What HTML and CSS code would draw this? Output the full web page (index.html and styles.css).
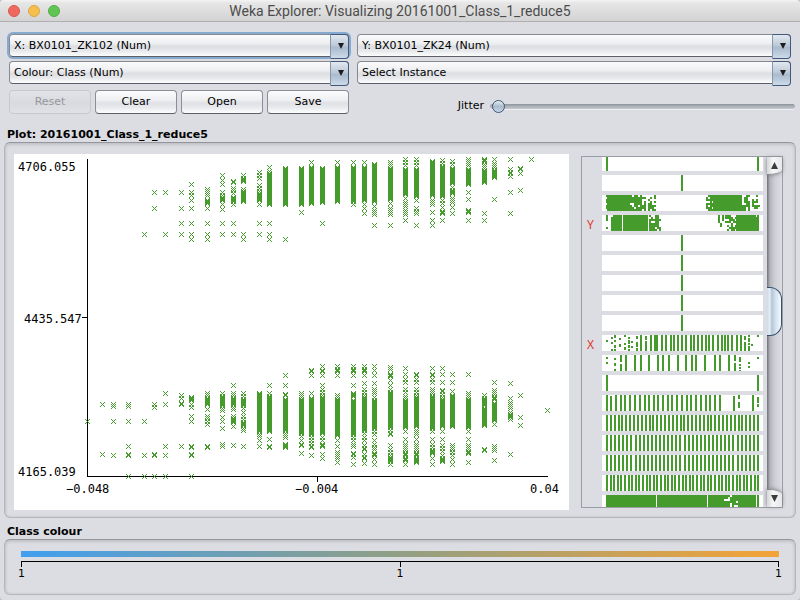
FILE: index.html
```html
<!DOCTYPE html>
<html lang="en">
<head>
<meta charset="utf-8">
<title>Weka Explorer: Visualizing 20161001_Class_1_reduce5</title>
<link rel="stylesheet" href="styles.css">
</head>
<body>
<div class="window">
  <header class="titlebar">
    <div class="lights">
      <button class="light light-close" aria-label="Close"></button>
      <button class="light light-min" aria-label="Minimise"></button>
      <button class="light light-zoom" aria-label="Zoom"></button>
    </div>
    <h1 class="title">Weka Explorer: Visualizing 20161001_Class_1_reduce5</h1>
  </header>

  <div class="controls">
    <div class="combo combo-focused"><select aria-label="X attribute"><option>X: BX0101_ZK102 (Num)</option></select></div>
    <div class="combo"><select aria-label="Y attribute"><option>Y: BX0101_ZK24 (Num)</option></select></div>
    <div class="combo"><select aria-label="Colour attribute"><option>Colour: Class (Num)</option></select></div>
    <div class="combo"><select aria-label="Selection shape"><option>Select Instance</option></select></div>
    <div class="buttons">
      <button class="btn" disabled>Reset</button>
      <button class="btn">Clear</button>
      <button class="btn">Open</button>
      <button class="btn">Save</button>
    </div>
    <div class="jitter">
      <label for="jitter">Jitter</label>
      <input id="jitter" type="range" min="0" max="50" value="0">
    </div>
  </div>

  <section>
    <h2 class="heading">Plot: 20161001_Class_1_reduce5</h2>
    <div class="panel plot-panel">
      <div class="plot">
        <svg class="plot-svg" viewBox="14 154 555 356">
          <g class="axis">
            <rect x="87" y="159" width="1" height="318"/>
            <rect x="87" y="476" width="461" height="1"/>
            <rect x="82" y="317" width="5" height="1"/>
            <rect x="317" y="477" width="1" height="5"/>
          </g>
          <path id="points" class="points"/>
          <g class="axis-text">
            <text x="18" y="171">4706.055</text>
            <text x="24" y="323">4435.547</text>
            <text x="18" y="476">4165.039</text>
            <text x="66" y="493">−0.048</text>
            <text x="295" y="493">−0.004</text>
            <text x="530" y="493">0.04</text>
          </g>
        </svg>
      </div>
      <div class="attributes">
        <div class="strips" id="strips"></div>
        <div class="scrollbar">
          <button class="arrow arrow-up" aria-label="Scroll up"><svg width="7" height="7"><path d="M3.500 0L7 7H0Z"/></svg></button>
          <div class="thumb"></div>
          <button class="arrow arrow-down" aria-label="Scroll down"><svg width="7" height="7"><path d="M0 0H7L3.500 7Z"/></svg></button>
        </div>
      </div>
    </div>
  </section>

  <section>
    <h2 class="heading heading-class">Class colour</h2>
    <div class="panel class-panel">
      <div class="ramp"></div>
      <div class="ruler"></div>
      <div class="ruler-text"><span>1</span><span>1</span><span>1</span></div>
    </div>
  </section>
</div>
<script src="script.js"></script>
</body>
</html>
```
FILE: styles.css
```css
* { box-sizing: border-box; }

body {
  margin: 0;
  background: #c4c4c6;
  color: #000;
  font: 11px/14px "DejaVu Sans", sans-serif;
}

button, select, input { font: inherit; color: inherit; margin: 0; }

.window {
  min-height: 100vh;
  background: #dcdde2;
  border-radius: 4px;
  overflow: hidden;
}

.titlebar {
  position: relative;
  display: flex;
  align-items: center;
  justify-content: center;
  height: 22px;
  background: linear-gradient(#f4f4f4, #e6e6e6 3px, #d3d3d3);
  border-bottom: 1px solid #b0b0b2;
}

.lights { position: absolute; left: 8px; top: 5px; display: flex; gap: 8px; }

.light { width: 12px; height: 12px; padding: 0; border: 1px solid; border-radius: 50%; }
.light-close { background: #ee6a5f; border-color: #dc5650; }
.light-min { background: #f5be4f; border-color: #dca93f; }
.light-zoom { background: #61c554; border-color: #50ad45; }

.title { margin: 0; font: 14px/20px Roboto, sans-serif; color: #4c4c4c; }

.controls {
  display: grid;
  grid-template-columns: 340px 1fr;
  gap: 4px 8px;
  padding: 12px 9px 0;
}

.combo { position: relative; height: 23px; }

.combo select {
  appearance: none;
  width: 100%;
  height: 23px;
  padding: 0 20px 0 4px;
  border: 1px solid #868991;
  border-bottom-color: #5c5f68;
  border-radius: 4px;
  background: linear-gradient(#fbfbfc, #eeeff1 40%, #dcdee2 55%, #e6e8eb 75%, #fcfdfd);
}

.combo::before {
  content: "";
  position: absolute;
  top: 0;
  right: 0;
  width: 17px;
  height: 23px;
  border: 1px solid #42597a;
  border-left-color: #8497ab;
  border-radius: 0 4px 4px 0;
  background: linear-gradient(#e2e8ef, #bccad8 45%, #a9bbcd 55%, #cddbe9);
  pointer-events: none;
}

.combo::after {
  content: "";
  position: absolute;
  top: 9px;
  right: 5px;
  border: 3px solid transparent;
  border-top: 6px solid #1d1d1f;
  border-bottom: 0;
  pointer-events: none;
}

.combo-focused select { box-shadow: 0 0 0 2px #86a9cf; }

.buttons { display: flex; gap: 4px; padding-top: 2px; }

.btn {
  flex: 1;
  height: 24px;
  padding: 0;
  border: 1px solid #8b8e96;
  border-bottom-color: #5c5f68;
  border-radius: 4px;
  background: linear-gradient(#fcfcfd, #eff0f2 40%, #dfe1e5 55%, #e8eaed 75%, #fcfdfd);
}

.btn:disabled {
  color: #95979c;
  border-color: #c6c8ce;
  background: linear-gradient(#e2e3e7, #d9dadf 55%, #e0e1e5);
}

.jitter {
  display: flex;
  align-items: center;
  justify-content: flex-end;
  gap: 6px;
  margin-right: -4px;
  padding-top: 10px;
}

.jitter input {
  appearance: none;
  width: 305px;
  height: 16px;
  background: none;
}

.jitter input::-webkit-slider-runnable-track {
  height: 5px;
  border-radius: 3px;
  background: linear-gradient(#8e9298, #a9adb4 40%, #c5cbd3);
  box-shadow: 0 1px 0 #eeeff2;
}

.jitter input::-webkit-slider-thumb {
  appearance: none;
  width: 13px;
  height: 13px;
  margin: -4px 0 0 2px;
  border: 1px solid #3f5672;
  border-radius: 50%;
  background: linear-gradient(#e8eef4, #a9bccd 50%, #c8d9e8);
}

.heading { margin: 14px 7px 0; font-size: 11px; line-height: 14px; }
.heading-class { margin-top: 7px; }

.panel {
  margin: 0 4px;
  border: 1px solid #b4b6bb;
  border-top-color: #94969b;
  border-radius: 6px;
  box-shadow: inset 0 2px 3px #c2c3c8, inset -1px 0 2px #c8c9cd, inset 1px 0 2px #c8c9cd;
}

.plot-panel { display: flex; gap: 12px; padding: 11px 12px 7px 9px; }
.plot { flex: 1; background: #fff; }
.plot-svg { display: block; width: 100%; shape-rendering: crispEdges; }
.axis { fill: #000; }
.points { fill: #459b2c; }
.axis-text { font: 12px "DejaVu Sans Mono", monospace; }

.attributes {
  display: flex;
  width: 202px;
  height: 352px;
  margin-top: 2px;
  border: 1px solid #9a9da3;
}

.strips { flex: 1; display: flex; flex-direction: column; gap: 4px; overflow: hidden; }
.strip { display: flex; align-items: center; height: 16px; flex: none; }
.strip:first-child { height: 14px; }
.strip:last-child { height: 12px; align-items: flex-start; overflow: hidden; }
.strip-name { width: 20px; padding: 4px 0 0 5px; font: 12px/14px "Noto Sans", sans-serif; color: #e0382c; }
.strip svg { width: 161px; height: 100%; background: #fff; shape-rendering: crispEdges; }

.scrollbar {
  position: relative;
  width: 15px;
  display: flex;
  flex-direction: column;
  justify-content: space-between;
  background: linear-gradient(90deg, #6f7277, #b3b5ba 3px, #cfd0d5 8px, #dcdde2);
}

.arrow {
  height: 17px;
  padding: 0;
  border: 0;
  background: linear-gradient(90deg, #d5d6da, #f7f7f8 40%, #e6e7ea);
}

.arrow svg { display: block; margin: 0 auto; fill: #3c3c3e; }
.arrow-up { border-radius: 0 0 14px 0 / 0 0 5px 0; box-shadow: 0 1px 4px #7a7d82; }
.arrow-down { border-radius: 0 14px 0 0 / 0 5px 0 0; box-shadow: 0 -1px 4px #7a7d82; }

.thumb {
  position: absolute;
  top: 130px;
  left: 0;
  width: 15px;
  height: 49px;
  border: 1px solid #35506e;
  border-left: 0;
  border-radius: 0 12px 12px 0;
  background: linear-gradient(90deg, #cddae6, #e4edf5 20%, #b3c5d7 35%, #d2e0ed 60%, #f4fbff);
}

.class-panel { height: 56px; padding: 11px 16px 0; }
.ramp { height: 6px; background: linear-gradient(90deg, #429fef, #919f84 50%, #f4a336); }

.ruler {
  height: 6px;
  margin-top: 4px;
  border: solid #000;
  border-width: 1px 1px 0;
  background: linear-gradient(#000, #000) center / 1px 100% no-repeat;
}

.ruler-text { display: flex; justify-content: space-between; margin: 0 -3px; }
```
FILE: script.js
```js
// Each column is "x: runs". A run is a single y, "a-b" (every pixel),
// "a~b" (every second pixel) or "a=b" (every third pixel).
const columns = `
87: 421
102: 404 454
113: 404~406 421 455
128: 404~406 421 446 454-455 476
144: 234 421 455 476
154: 192 208 404 407 454-455 476
165: 192 234 393 404 446 455 476
181: 192 208 223 234 395 398 403-404 446
191: 184 192=195 200 208 223 234 239 397-400 404 407 416 421 446-447 454-455 476
207: 189~195 200-203 208 223 234 239 393~395 398-404 409 416~418 421 424 446-447
222: 175 180 184 192=195 197-200 204 209 223 234 393 396-405 408~410 417 421 428 444~447
233: 181-182 188 190=195 197-201 204 223 234 385 393~395 398-404 407~409 416 418-422 426 445
243: 175 178-181 189 191-201 234 239 393=399 400-405 408 412 416=420 422-425 428~430 446
259: 172 175=178 185 188=191 193-200 204 223 234 393-431 434~436 440 446
269: 167 171 173-204 223 234 239 385 393 396-431 439 446-447
285: 168-204 239 375 385 394-395 399-430 433~437 444-447
301: 168-204 212 393~397 399-433 436 440 444-445 453
311: 162 167-203 370-371 375 393 398-434 437 440 443 446-447 455
322: 168-202 223 366 370-371 375 385 389 392=395 397-433 437 440 444-446 454 458
337: 162 167-201 366 369-371 375 395~397 399-435 440 446 452~458 462
353: 162 167-201 204 366 369-371 375 385 393-396 400-434 437 440 444~447 453-454 457 464
364: 162 167-200 204 208 213 366 369-371 375 383 389=395 397-430 433 437 440 445 448-449 454 457-458 463
374: 164-201 206 210~214 225 366 370 375 383 389~393 397 400-428 431=434 440 444 447 449 453-455 459 464
390: 162~166 168-199 203 208~214 225 367~369 374-376 380 385 389 392-427 430 433-434 445 449=452 455 457-461 464
405: 159=165 169-194 198 202~206 210~214 220 368 374 379=382 389 392 396~398 400-427 431 439 444~450 453-455 458-460 464
416: 159=165 169-196 200 208 211~214 225 374-375 379=382 389 392=395 397-426 430~434 439 444~450 453-455 458-462
432: 161-195 200~204 212 220 225 368 374-375 379=382 389~393 396-428 431 439 444=447 450-453 458 464
442: 160=163 166-196 200 203 207 211-213 220 368 374 382 390-391 394=397 399-426 431 439 445=448 451 455 458-461
452: 161=164 168-183 187 190-193 198~202 207 213 374 382 391 395-426 445~449 452=455 459 464
468: 159~165 169-184 192 199 210-212 220 374 393~397 399-427 431 439 445~449 451-453 462
484: 159-161 164~168 170-182 213 220 395 398-405 408-425 449-450
494: 159 163~167 170-177 199 382 390~394 397-399 403-420 424 446~450 460
510: 159 169 172-173 176 192 213 383 398 402~408 412 414-417 419 454
520: 168-169 173 190 395 417 425
531: 159
547: 410`;

// A cross is five pixels wide, drawn as unit squares.
const cross = [[-2, -2], [2, -2], [-1, -1], [1, -1], [0, 0], [-1, 1], [1, 1], [-2, 2], [2, 2]];
const strides = { "-": 1, "~": 2, "=": 3 };
const cells = new Set();

columns.trim().split("\n").forEach(line => {
  const [x, runs] = line.split(": ");
  runs.split(" ").forEach(run => {
    const [, a, kind, b] = run.match(/^(\d+)([-~=])?(\d+)?$/);
    for (let y = +a; y <= +(b || a); y += strides[kind] || 1) {
      cross.forEach(([dx, dy]) => cells.add(`${+x + dx} ${y + dy}`));
    }
  });
});
document.getElementById("points").setAttribute("d",
  [...cells].map(c => `M${c}h1v1h-1z`).join(""));

// Repeatable noise for the thinly covered parts of a strip.
let seed = 7;
const noise = () => (seed = (seed * 16807) % 2147483647) / 2147483647;
const bars = list => list.map(x => `M${x} 0h2v16h-2z`).join("");
const every = step => bars(Array.from({ length: Math.round(151 / step) + 1 }, (_, i) => Math.round(4 + i * step)));
const block = (a, b) => `M${a} 0H${b}V16H${a}z`;
const speckle = (a, b, density) => {
  let d = "";
  for (let x = a; x < b; x += 2)
    for (let y = 0; y < 16; y += 2)
      if (noise() < density) d += `M${x} ${y}h2v2h-2z`;
  return d;
};
const dots = list => list.map(([x, y, h = 2]) => `M${x} ${y}h2v${h}h-2z`).join("");

const middle = bars([79]);
const ends = bars([4, 155]);
const strips = [
  ["", ends],
  ["", middle],
  ["", block(5, 26) + speckle(4, 6, .7) + speckle(26, 40, .9) + speckle(40, 44, .6) + speckle(46, 54, .6)
    + speckle(104, 111, .8) + block(111, 140) + speckle(140, 148, .75) + speckle(150, 158, .5)],
  ["Y", dots([[4, 0, 6], [4, 12], [9, 2, 3]]) + block(11, 20) + block(21, 46) + speckle(9, 11, .6) + speckle(47, 58, .75)
    + speckle(116, 122, .5) + speckle(123, 134, .6) + block(134, 154) + speckle(153, 157, .8)],
  ["", middle], ["", middle], ["", middle], ["", middle], ["", middle],
  ["X", dots([[4, 5], [9, 2], [9, 7], [9, 14], [12, 0, 3], [12, 5], [12, 10, 3], [12, 14], [17, 3], [17, 9, 3],
      [22, 0], [22, 8], [22, 12, 3], [26, 2], [26, 5, 4], [26, 10, 3], [26, 14], [29, 6], [29, 11, 2], [34, 1, 3], [34, 7, 5], [34, 13, 3],
      [43, 1, 4], [43, 6, 10], [142, 1, 4], [142, 7, 9], [146, 0, 2], [146, 3, 4], [146, 8, 2], [146, 11, 5], [149, 9], [155, 0]])
    + bars([38, 48, 52, 54, 59, 63, 68, 71, 75, 79, 83, 88, 91, 95, 99, 103, 106, 110, 115, 119, 122, 125, 129, 134, 138])],
  ["", dots([[4, 2], [4, 7], [12, 3], [12, 8, 3], [12, 14], [18, 0, 7], [18, 9, 7], [132, 0, 6], [132, 8, 8], [137, 2, 5], [137, 9], [137, 12], [137, 15, 1], [146, 7], [146, 11], [155, 2]])
    + bars([23, 32, 38, 46, 55, 60, 66, 75, 83, 89, 93, 102, 112, 117, 126])],
  ["", ends],
  ["", dots([[8, 1, 15], [131, 1, 15], [136, 0, 4], [136, 7, 6], [155, 2, 6], [155, 9, 3]])
    + bars([4, 13, 18, 22, 27, 32, 37, 42, 46, 51, 55, 60, 65, 69, 74, 79, 84, 88, 93, 98, 103, 107, 112, 117, 150])],
  ["", every(3.87)],
  ["", every(4.08)],
  ["", every(4.08)],
  ["", every(3.6)],
  ["", block(4, 54) + block(55, 105) + block(106, 122) + speckle(122, 128, .85) + speckle(128, 136, .8) + block(136, 154) + block(155, 157)]
];

document.getElementById("strips").innerHTML = strips.map(([name, d]) =>
  `<div class="strip"><span class="strip-name">${name}</span><svg><path class="points" d="${d}"/></svg></div>`).join("");
```
